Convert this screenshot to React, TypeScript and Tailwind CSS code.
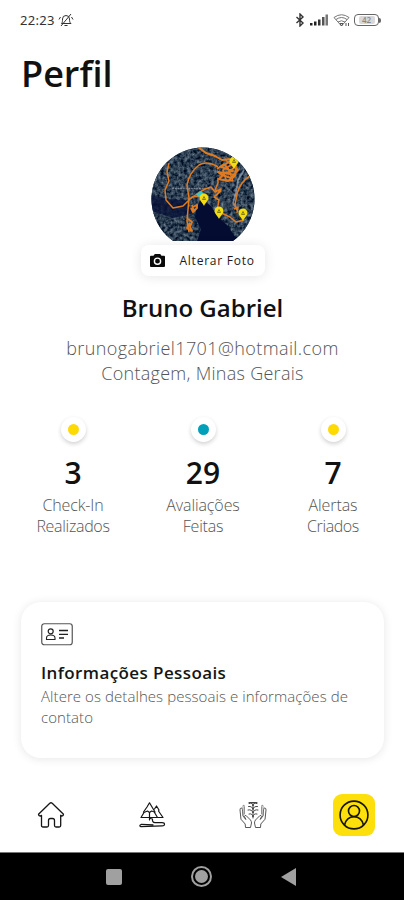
import clsx from "clsx";

const STATS = [
  {
    value: "3",
    dot: "bg-[#fddb00]",
    lines: [
      { text: "Check-In", className: "tracking-[-0.15px]" },
      { text: "Realizados", className: "tracking-[-0.3px]" },
    ],
  },
  {
    value: "29",
    dot: "bg-[#00a0b9]",
    lines: [
      { text: "Avaliações", className: "tracking-[-0.1px]" },
      { text: "Feitas", className: "tracking-[-0.2px]" },
    ],
  },
  {
    value: "7",
    dot: "bg-[#fddb00]",
    lines: [
      { text: "Alertas", className: "tracking-[-0.1px]" },
      { text: "Criados", className: "tracking-[-0.4px]" },
    ],
  },
];

const PINS = [
  [83, 15],
  [53, 52],
  [68, 65],
  [92, 67],
];

function StatusBar() {
  return (
    <div className="flex h-10 items-center pl-5 pr-[23px] text-[#333]">
      <span className="font-['Noto_Sans',sans-serif] text-[13px] leading-4 tracking-[0.3px]">22:23</span>
      <svg width="16" height="16" viewBox="0 0 16 16" fill="none" stroke="#333" className="ml-[3px]">
        <path d="M3.500 11.500c1-1 1-2.500 1-4.500a3.500 3.500 0 0 1 7 0c0 2 .2 3.500 1.500 4.500zM6.500 13.500h3M3 14 13 2M1 7.500 2.500 5M15 7.500 13.500 5" />
      </svg>
      <div className="ml-auto flex items-center">
        <svg width="10" height="14" viewBox="0 0 10 14" fill="none" stroke="#333" strokeWidth="1.400">
          <path d="M1.500 4 8 10 5 13V1L8 4 1.500 10" />
        </svg>
        <svg width="19" height="12" viewBox="0 0 19 12" className="ml-[5px]">
          <rect x="0" y="9" width="2.500" height="2.500" fill="#222" />
          <rect x="4" y="7.500" width="2.500" height="4" fill="#222" />
          <rect x="8" y="5.500" width="2.500" height="6" fill="#333" />
          <rect x="12" y="3" width="2.500" height="8.500" fill="#555" />
          <rect x="15.500" y="0.500" width="2.500" height="11" fill="#777" />
        </svg>
        <svg width="17" height="13" viewBox="0 0 17 13" fill="none" stroke="#777" className="ml-1">
          <path d="M1 3.500Q8.500-2 16 3.500L8.500 12zM3 5.500q5.500-4 11 0M5 8q3.500-2.500 7 0" />
          <path d="M7 9.500h3L8.500 12zM13 9v3M15.500 9v3" stroke="#555" />
        </svg>
        <div className="ml-[4px] flex h-[12px] w-[25px] items-center justify-center rounded-[4px] border border-[#666] bg-white p-px">
          <span className="flex h-full w-[16px] items-center justify-center rounded-[2px] bg-[#d8d8d8] text-[8px] font-semibold leading-none text-[#888]">
            42
          </span>
        </div>
        <span className="h-[5px] w-[2px] rounded-r bg-[#666]" />
      </div>
    </div>
  );
}

function MapAvatar() {
  return (
    <svg width="104" height="94" viewBox="0 0 104 94">
      <defs>
        <clipPath id="avatar">
          <circle cx="52" cy="52" r="51.500" />
        </clipPath>
        <filter id="land" x="0" y="0" width="100%" height="100%" colorInterpolationFilters="sRGB">
          <feTurbulence type="fractalNoise" baseFrequency="0.3" numOctaves="3" seed="4" />
          <feColorMatrix values="0.75 0 0 0 -0.2  0.75 0 0 0 -0.13  0.7 0 0 0 -0.03  0 0 0 0 1" />
        </filter>
      </defs>
      <g clipPath="url(#avatar)">
        <rect width="104" height="104" fill="#1c2c42" />
        <rect width="104" height="104" filter="url(#land)" />
        <path d="M0 48 16 52 34 53 43 66 36 68 22 71 0 64z" fill="#071238" opacity="0.8" />
        <path d="M50 52 45 62 44 70 50 82 46 94H87L76 78 67 70 59 58z" fill="#040c32" />
        <path d="M93 23 87 33 85 46 82 56 86 63" fill="none" stroke="#9aa9bd" strokeWidth="1.800" opacity="0.7" />
        <path d="M21 41.500H58" stroke="#c5c8cf" strokeWidth="1.600" strokeDasharray="2 .7" opacity="0.5" />
        <g fill="none" stroke="#e17b20" strokeWidth="1.500" strokeLinejoin="round">
          <path d="M18 16 16 25 18 34 14 43 15 53 22 61 32 59 41 50 51 49" />
          <path d="M38 85 36 74 38 51 36 38Q38 26 48 18 56 13 67 20" />
          <path d="M47 0 55 6 64 9 71 13 79 12" strokeWidth="2" />
          <path d="M42 60 46 58 46 61 42 65 40 61M41 58 43 65M37 72l4 3-2 5 2 4-5-3 3-5" strokeWidth="1.900" />
          <path d="M66 22 73 17 79 24 85 19 84 29 77 34 68 32 74 26 82 24 70 20 78 15 87 23 80 31 71 28 67 25 85 28" strokeWidth="1.900" />
          <path d="M74 12 80 18 72 23 75 33 82 34 77 21M67 31 67 36 64 43 70 44 63 50 68 53 66 64 79 70 85 75 93 73" />
          <path d="M39 52 46 47 54 42 60 40 64 45 70 42 65 49" />
          <path d="M99 29Q89 35 86 47L84 58 87 65M83 62l4-2-1 6" />
        </g>
        <path d="M45 48 49 44 53 46 50 51z" fill="#35c8d5" />
        {PINS.map(([x, y]) => (
          <g key={x} transform={`translate(${x} ${y})`}>
            <path d="M-4.500-1a4.500 4.500 0 0 1 9 0C4.500 2 1 4 0 7-1 4-4.500 2-4.500-1z" fill="#f4dc12" />
            <path d="M-1.500.5 0-2.500 1.500.5z" fill="none" stroke="#6d6408" strokeWidth="0.800" />
          </g>
        ))}
      </g>
    </svg>
  );
}

function CameraIcon() {
  return (
    <svg width="15" height="13" viewBox="0 0 15 13" className="shrink-0">
      <path d="M4.800 0h5.400l1.300 1.700H14a1 1 0 0 1 1 1V12a1 1 0 0 1-1 1H1a1 1 0 0 1-1-1V2.700a1 1 0 0 1 1-1h2.500z" fill="#0a0a0a" />
      <circle cx="7.500" cy="7.200" r="3.100" fill="none" stroke="#fff" strokeWidth="1.400" />
    </svg>
  );
}

function IdCardIcon() {
  return (
    <svg width="32" height="23" viewBox="0 0 32 23" fill="none" stroke="#222">
      <rect x="0.750" y="0.750" width="30.500" height="21" rx="2.500" stroke="#555" strokeWidth="1.200" />
      <circle cx="9.700" cy="8.300" r="2.500" strokeWidth="1.200" />
      <path d="M5.500 16.500V15c0-1.500 1.500-3 4.200-3S14 13.500 14 15v1.500z" strokeWidth="1.100" />
      <path d="M18 7.500h9M18 11.300h9M18 15h5" strokeWidth="1.300" />
    </svg>
  );
}

function HomeIcon() {
  return (
    <svg width="28" height="28" viewBox="0 0 28 28" fill="none" stroke="#151515" strokeWidth="1.300" strokeLinejoin="round" strokeLinecap="round">
      <path d="M4.500 14.300 3.200 15.100Q1.500 14.800 1.500 13.200L12.800 2.200Q14 1.300 15.200 2.200L26.500 13.200Q26.500 14.800 24.800 15.100L23.700 14.300V24.500Q23.700 26 22.200 26H19Q17.500 26 17.500 24.500V19.500Q17.500 17.500 15.500 17.500H13.500Q11.500 17.500 11.500 19.500V24.500Q11.500 26 10 26H6Q4.500 26 4.500 24.500z" />
    </svg>
  );
}

function TrailIcon() {
  return (
    <svg width="28" height="28" viewBox="0 0 28 28" fill="none" stroke="#151515" strokeWidth="1.200" strokeLinejoin="round" strokeLinecap="round">
      <path d="M3 16.500 6 11.500 5.500 11 9 6 11.500 1.800 14 6 17 11 16.500 11.500 19.500 16.500z" />
      <path d="M6.500 11.200 9.500 10 11.500 11.500 13.500 10 16.500 11M11.500 12v7" />
      <path d="M16.500 8 18.500 5 21 9 20.500 10 25 16.500H19.500" />
      <path d="M12 17.500 14.500 18Q14 21.500 17 21.700H24Q26.500 21.700 26.500 23.300T24 24.800L3 25.700Q1.500 25.500 2 24.300L3.500 23.300 15 23.800" />
    </svg>
  );
}

function HandsIcon() {
  return (
    <svg width="28" height="28" viewBox="0 0 28 28" fill="none" stroke="#444" strokeWidth="0.900" strokeLinejoin="round" strokeLinecap="round">
      <path d="M1 8.500Q1 7 2.200 7T3.400 8.500L4 15 6.800 18.500 5.500 15.500Q5.800 13.700 7.300 14.800L11.500 19Q12.600 20.500 12.500 22L11.500 26.500H6.500L6.200 23 2.200 18.500z" />
      <path d="M27 8.500Q27 7 25.800 7T24.600 8.500L24 15 21.200 18.500 22.500 15.500Q22.200 13.700 20.700 14.800L16.500 19Q15.400 20.500 15.500 22L16.500 26.500H21.500L21.800 23 25.800 18.500z" />
      <path d="M4 14V4.500Q5.500 3.500 5.500 5.500V13M24 14V4.500Q22.500 3.500 22.500 5.500V13" stroke="#888" />
      <path d="M14 1.500V17M10 2.500Q14 1.500 14 5 14 1.500 18 2.500M9.500 5.500Q13.500 5 14 8.500 14.500 5 18.500 5.500M9 9Q13 8 14 12 15 8 19 9M10 13Q13.500 12 14 16 14.500 12 18 13M10 1.500H18" stroke="#333" />
    </svg>
  );
}

function ProfileIcon() {
  return (
    <svg width="30" height="30" viewBox="0 0 30 30" fill="none" stroke="#151500" strokeWidth="1.600">
      <circle cx="15" cy="15" r="13.900" />
      <circle cx="15" cy="11" r="5.500" />
      <path d="M5.500 25Q7.500 16.700 15 16.700T24.500 25" />
    </svg>
  );
}

const TABS = [
  { id: "home", icon: <HomeIcon /> },
  { id: "trails", icon: <TrailIcon /> },
  { id: "nature", icon: <HandsIcon /> },
  { id: "profile", icon: <ProfileIcon />, active: true },
];

export default function App() {
  return (
    <main className="flex h-[900px] w-[404px] flex-col overflow-hidden bg-white font-['Open_Sans',sans-serif]">
      <StatusBar />

      <h1 className="mt-[10px] pl-[21px] text-[36px] font-semibold leading-[48px] text-[#111]">Perfil</h1>

      <section className="mt-[49px] flex flex-col items-center pl-px">
        <MapAvatar />
        <button
          type="button"
          className="mt-1 flex h-[31px] w-[124px] items-center rounded-lg bg-white pl-[9px] shadow-[0_1px_12px_rgba(0,0,0,0.1)]"
        >
          <CameraIcon />
          <span className="ml-[15px] whitespace-nowrap text-xs font-medium tracking-[0.75px] text-[#1c1c1c]">Alterar Foto</span>
        </button>
        <h2 className="mt-[16px] text-2xl font-semibold leading-8 text-[#111]">Bruno Gabriel</h2>
        <div className="mt-3 text-center text-lg font-light leading-[25px] text-[#555]">
          <p className="tracking-[0.4px]">brunogabriel1701@hotmail.com</p>
          <p className="tracking-[0.28px]">Contagem, Minas Gerais</p>
        </div>
      </section>

      <section className="mt-[31px] grid grid-cols-3 pl-[8px] pr-[6px]">
        {STATS.map((stat) => (
          <div key={stat.value} className="flex flex-col items-center">
            <span className="flex h-[25px] w-[25px] items-center justify-center rounded-full bg-white shadow-[0_2px_4px_rgba(0,0,0,0.18)]">
              <span className={clsx("h-[11px] w-[11px] rounded-full", stat.dot)} />
            </span>
            <strong className="mt-[13px] text-[30px] font-semibold leading-9 text-[#111]">{stat.value}</strong>
            <div className="mt-1 text-center text-base font-light leading-[20.5px] text-[#555]">
              {stat.lines.map((line) => (
                <p key={line.text} className={line.className}>
                  {line.text}
                </p>
              ))}
            </div>
          </div>
        ))}
      </section>

      <section className="ml-[21px] mr-5 mt-[66px] h-[156px] rounded-[20px] bg-white pl-[20px] pt-[21px] shadow-[0_1px_10px_rgba(0,0,0,0.1)]">
        <IdCardIcon />
        <h3 className="mt-[15px] text-[17px] font-semibold leading-6 tracking-[0.4px] text-[#151515]">Informações Pessoais</h3>
        <p className="w-[320px] pt-px text-[15px] font-light leading-[21px] tracking-[0.07px] text-[#555]">
          Altere os detalhes pessoais e informações de contato
        </p>
      </section>

      <nav className="mt-9 flex h-[42px] items-center justify-between pl-[30px] pr-[29px]">
        {TABS.map((tab) => (
          <button
            key={tab.id}
            type="button"
            aria-label={tab.id}
            className={clsx(
              "flex h-[42px] w-[42px] items-center justify-center rounded-[9px]",
              tab.active && "bg-[#fddf0c]",
            )}
          >
            {tab.icon}
          </button>
        ))}
      </nav>

      <footer className="mt-auto flex h-12 items-center justify-center gap-[69px] border-t border-[#777] bg-black pr-[2px]">
        <span className="h-4 w-4 rounded-[2px] bg-[#a0a0a0]" />
        <span className="flex h-[21px] w-[21px] items-center justify-center rounded-full border-2 border-[#a0a0a0]">
          <span className="h-[13px] w-[13px] rounded-full bg-[#a0a0a0]" />
        </span>
        <svg width="15" height="18" viewBox="0 0 15 18">
          <path d="M0 9 15 0V18z" fill="#a0a0a0" />
        </svg>
      </footer>
    </main>
  );
}
